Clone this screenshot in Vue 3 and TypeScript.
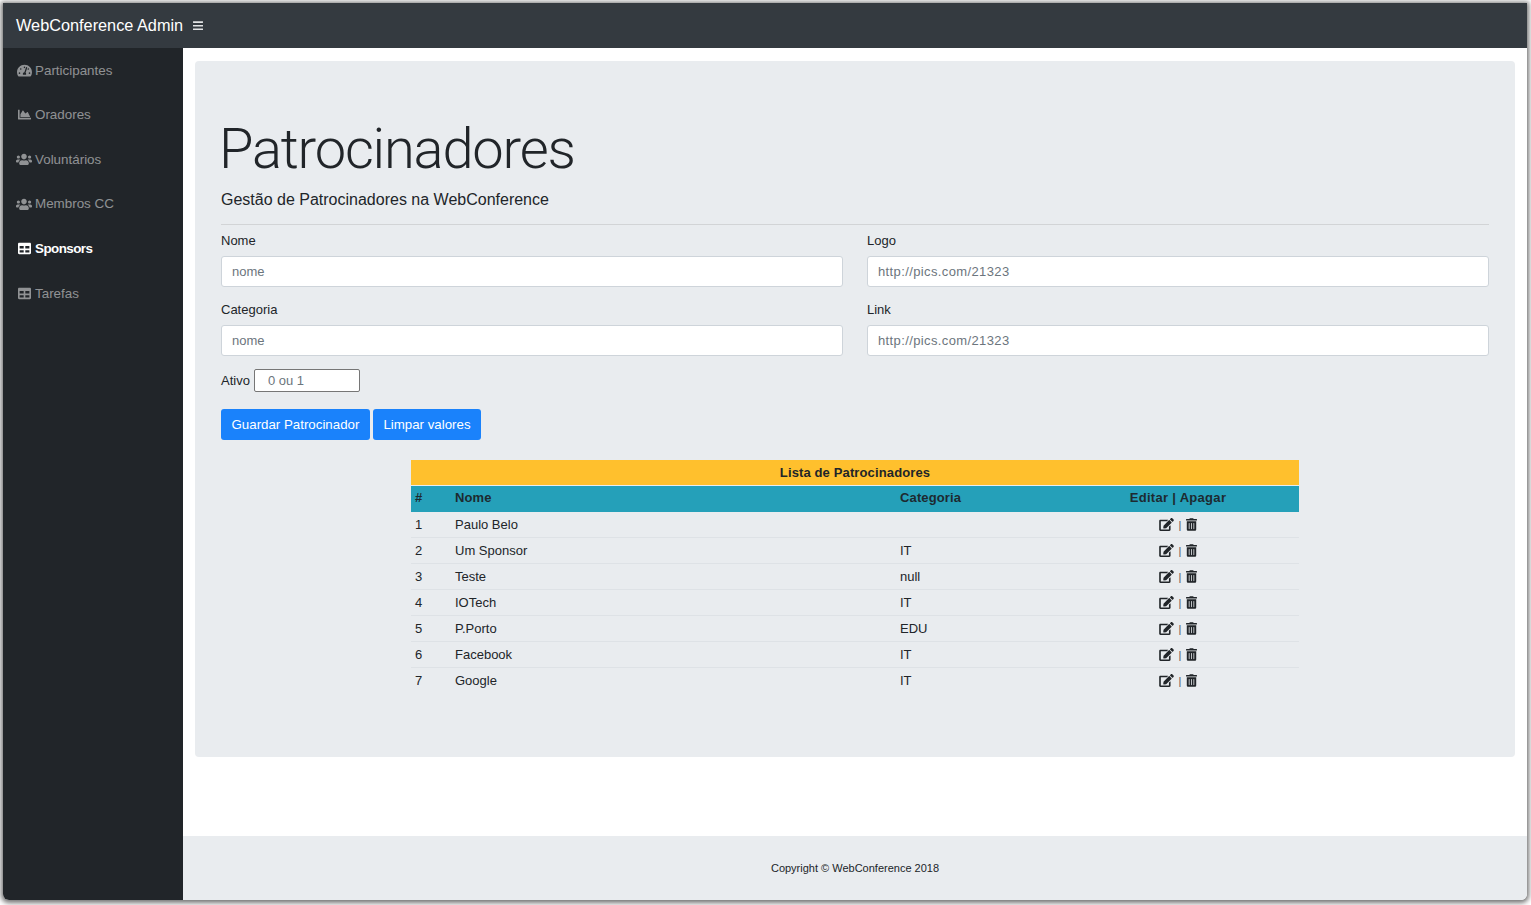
<template>
    <div class="window">
        <header class="topbar">
            <span class="brand">WebConference Admin</span>
            <svg class="bars" viewBox="0 0 448 512"><path :d="icons.bars" /></svg>
        </header>

        <div class="body-row">
            <nav class="sidebar">
                <a v-for="item in menu" :key="item.label" class="nav-item" :class="{ active: item.active }">
                    <span class="nav-icon">
                        <svg :viewBox="`0 0 ${item.w} 512`" :style="{ width: item.size + 'px' }"><path :d="item.d" /></svg>
                    </span>
                    {{ item.label }}
                </a>
            </nav>

            <div class="main">
                <div class="content">
                    <section class="jumbotron">
                        <h1>Patrocinadores</h1>
                        <p class="lead">Gestão de Patrocinadores na WebConference</p>
                        <hr />

                        <div class="form-grid">
                            <div class="field">
                                <label>Nome</label>
                                <input type="text" placeholder="nome" />
                            </div>
                            <div class="field">
                                <label>Logo</label>
                                <input class="url" type="text" placeholder="http://pics.com/21323" />
                            </div>
                            <div class="field">
                                <label>Categoria</label>
                                <input type="text" placeholder="nome" />
                            </div>
                            <div class="field">
                                <label>Link</label>
                                <input class="url" type="text" placeholder="http://pics.com/21323" />
                            </div>
                        </div>

                        <div class="ativo">
                            <label>Ativo</label>
                            <input type="text" placeholder="0 ou 1" />
                        </div>

                        <div class="actions">
                            <button>Guardar Patrocinador</button>
                            <button>Limpar valores</button>
                        </div>

                        <table class="list">
                            <colgroup>
                                <col class="c-id" />
                                <col class="c-name" />
                                <col class="c-cat" />
                                <col />
                            </colgroup>
                            <thead>
                                <tr class="title-row">
                                    <th colspan="4">Lista de Patrocinadores</th>
                                </tr>
                                <tr class="head-row">
                                    <th>#</th>
                                    <th>Nome</th>
                                    <th>Categoria</th>
                                    <th class="c-act">Editar | Apagar</th>
                                </tr>
                            </thead>
                            <tbody>
                                <tr v-for="row in sponsors" :key="row.id">
                                    <td>{{ row.id }}</td>
                                    <td>{{ row.name }}</td>
                                    <td>{{ row.category }}</td>
                                    <td class="c-act">
                                        <svg class="edit" viewBox="0 0 576 512"><path :d="icons.edit" /></svg>
                                        <span class="sep">|</span>
                                        <svg class="trash" viewBox="0 0 448 512"><path :d="icons.trash" /></svg>
                                    </td>
                                </tr>
                            </tbody>
                        </table>
                    </section>
                </div>

                <footer class="footer">Copyright © WebConference 2018</footer>
            </div>
        </div>
    </div>
</template>

<script setup lang="ts">
const icons = {
    bars: 'M16 132h416c8.837 0 16-7.163 16-16V76c0-8.837-7.163-16-16-16H16C7.163 60 0 67.163 0 76v40c0 8.837 7.163 16 16 16zm0 160h416c8.837 0 16-7.163 16-16v-40c0-8.837-7.163-16-16-16H16c-8.837 0-16 7.163-16 16v40c0 8.837 7.163 16 16 16zm0 160h416c8.837 0 16-7.163 16-16v-40c0-8.837-7.163-16-16-16H16c-8.837 0-16 7.163-16 16v40c0 8.837 7.163 16 16 16z',
    gauge: 'M288 32C128.94 32 0 160.94 0 320c0 52.8 14.25 102.26 39.06 144.8 5.61 9.62 16.3 15.2 27.44 15.2h443c11.14 0 21.83-5.58 27.44-15.2C561.75 422.26 576 372.8 576 320c0-159.06-128.94-288-288-288zm0 64c14.71 0 26.58 10.13 30.32 23.65-1.11 2.26-2.64 4.23-3.45 6.67l-9.22 27.67c-5.13 3.49-10.97 6.01-17.64 6.01-17.67 0-32-14.33-32-32S270.33 96 288 96zM96 384c-17.67 0-32-14.33-32-32s14.33-32 32-32 32 14.33 32 32-14.33 32-32 32zm48-160c-17.67 0-32-14.33-32-32s14.33-32 32-32 32 14.33 32 32-14.33 32-32 32zm246.77-72.41l-61.33 184C343.13 347.33 352 364.54 352 384c0 11.72-3.38 22.55-8.88 32H232.88c-5.5-9.45-8.88-20.28-8.88-32 0-33.94 26.5-61.43 59.9-63.59l61.34-184.01c4.17-12.56 17.73-19.45 30.36-15.17 12.57 4.19 19.35 17.79 15.17 30.36zm14.66 57.2l15.52-46.55c3.47-1.29 7.13-2.23 11.05-2.23 17.67 0 32 14.33 32 32s-14.33 32-32 32c-11.38-.01-20.89-6.28-26.57-15.22zM480 384c-17.67 0-32-14.33-32-32s14.33-32 32-32 32 14.33 32 32-14.33 32-32 32z',
    chart: 'M500 384c6.6 0 12 5.4 12 12v40c0 6.6-5.4 12-12 12H12c-6.6 0-12-5.4-12-12V76c0-6.6 5.4-12 12-12h40c6.6 0 12 5.4 12 12v308h436zM372.7 159.5L288 216l-85.3-113.7c-5.1-6.8-15.5-6.3-19.9 1L96 248v104h384l-89.9-187.8c-3.2-6.5-11.4-8.7-17.4-4.7z',
    users: 'M96 224c35.3 0 64-28.7 64-64s-28.7-64-64-64-64 28.7-64 64 28.7 64 64 64zm448 0c35.3 0 64-28.7 64-64s-28.7-64-64-64-64 28.7-64 64 28.7 64 64 64zm32 32h-64c-17.6 0-33.5 7.1-45.1 18.6 40.3 22.1 68.9 62 75.1 109.4h66c17.7 0 32-14.3 32-32v-32c0-35.3-28.7-64-64-64zm-256 0c61.9 0 112-50.1 112-112S381.9 32 320 32 208 82.1 208 144s50.1 112 112 112zm76.8 32h-8.3c-20.8 10-43.9 16-68.5 16s-47.6-6-68.5-16h-8.3C179.6 288 128 339.6 128 403.2V432c0 26.5 21.5 48 48 48h288c26.5 0 48-21.5 48-48v-28.8c0-63.6-51.6-115.2-115.2-115.2zm-223.7-13.4C161.5 263.1 145.6 256 128 256H64c-35.3 0-64 28.7-64 64v32c0 17.7 14.3 32 32 32h65.9c6.3-47.4 34.9-87.3 75.2-109.4z',
    table: 'M464 32H48C21.49 32 0 53.49 0 80v352c0 26.51 21.49 48 48 48h416c26.51 0 48-21.49 48-48V80c0-26.51-21.49-48-48-48zM224 416H64v-96h160v96zm0-160H64v-96h160v96zm224 160H288v-96h160v96zm0-160H288v-96h160v96z',
    edit: 'M402.6 83.2l90.2 90.2c3.8 3.8 3.8 10 0 13.8L274.4 405.6l-92.8 10.3c-12.4 1.4-22.9-9.1-21.5-21.5l10.3-92.8L388.8 83.2c3.8-3.8 10-3.8 13.8 0zm162-22.9l-48.8-48.8c-15.2-15.2-39.9-15.2-55.2 0l-35.4 35.4c-3.8 3.8-3.8 10 0 13.8l90.2 90.2c3.8 3.8 10 3.8 13.8 0l35.4-35.4c15.2-15.3 15.2-40 0-55.2zM384 346.2V448H64V128h229.8c3.2 0 6.2-1.3 8.5-3.5l40-40c7.6-7.6 2.2-20.5-8.5-20.5H48C21.5 64 0 85.5 0 112v352c0 26.5 21.5 48 48 48h352c26.5 0 48-21.5 48-48V306.2c0-10.7-12.9-16-20.5-8.5l-40 40c-2.2 2.3-3.5 5.3-3.5 8.5z',
    trash: 'M32 464a48 48 0 0 0 48 48h288a48 48 0 0 0 48-48V128H32zm272-256a16 16 0 0 1 32 0v224a16 16 0 0 1-32 0zm-96 0a16 16 0 0 1 32 0v224a16 16 0 0 1-32 0zm-96 0a16 16 0 0 1 32 0v224a16 16 0 0 1-32 0zM432 32H312l-9.4-18.7A24 24 0 0 0 281.1 0H166.8a23.72 23.72 0 0 0-21.4 13.3L136 32H16A16 16 0 0 0 0 48v32a16 16 0 0 0 16 16h416a16 16 0 0 0 16-16V48a16 16 0 0 0-16-16z'
}

const menu = [
    { label: 'Participantes', d: icons.gauge, w: 576, size: 15, active: false },
    { label: 'Oradores', d: icons.chart, w: 512, size: 13, active: false },
    { label: 'Voluntários', d: icons.users, w: 640, size: 16, active: false },
    { label: 'Membros CC', d: icons.users, w: 640, size: 16, active: false },
    { label: 'Sponsors', d: icons.table, w: 512, size: 13, active: true },
    { label: 'Tarefas', d: icons.table, w: 512, size: 13, active: false }
]

const sponsors = [
    { id: 1, name: 'Paulo Belo', category: '' },
    { id: 2, name: 'Um Sponsor', category: 'IT' },
    { id: 3, name: 'Teste', category: 'null' },
    { id: 4, name: 'IOTech', category: 'IT' },
    { id: 5, name: 'P.Porto', category: 'EDU' },
    { id: 6, name: 'Facebook', category: 'IT' },
    { id: 7, name: 'Google', category: 'IT' }
]
</script>

<style>
html,
body {
    margin: 0;
    height: 100%;
    background: #fff;
    overflow: hidden;
}
</style>

<style scoped>
.window {
    display: flex;
    flex-direction: column;
    height: 897px;
    margin: 3px 4px 0 3px;
    background: #fff;
    border-radius: 0 0 6px 6px;
    overflow: hidden;
    box-shadow: 0 1px 5px 2px rgba(0, 0, 0, 0.55);
    font-family: 'Liberation Sans', Arial, sans-serif;
    font-size: 13px;
    color: #212529;
}

.topbar {
    display: flex;
    align-items: center;
    flex: none;
    height: 45px;
    padding-left: 13px;
    background: #343a40;
}

.brand {
    font-size: 16.3px;
    color: #fff;
}

.bars {
    width: 10px;
    margin-left: 10px;
    fill: #e2e3e5;
}

.body-row {
    display: flex;
    flex: 1;
    min-height: 0;
}

.sidebar {
    display: flex;
    flex-direction: column;
    flex: none;
    width: 180px;
    background: #212529;
}

.nav-item {
    display: flex;
    align-items: center;
    height: 44.55px;
    padding-left: 13px;
    font-size: 13.4px;
    color: rgba(255, 255, 255, 0.5);
}

.nav-item.active {
    color: #fff;
    font-weight: 700;
    letter-spacing: -0.55px;
}

.nav-icon {
    display: flex;
    justify-content: center;
    width: 16px;
    margin-right: 3px;
}

.nav-icon svg {
    fill: currentColor;
}

.main {
    display: flex;
    flex-direction: column;
    flex: 1;
    min-width: 0;
}

.content {
    flex: 1;
    padding: 13px 12px 0;
}

.jumbotron {
    height: 696px;
    box-sizing: border-box;
    padding: 54px 26px 0;
    background: #e9ecef;
    border-radius: 4px;
}

h1 {
    margin: 0 0 0 -2px;
    font-family: Roboto, 'Liberation Sans', sans-serif;
    font-size: 56px;
    font-weight: 300;
    line-height: 68px;
    letter-spacing: -1.2px;
}

.lead {
    margin: 5px 0 0;
    font-size: 16px;
    line-height: 24px;
}

hr {
    height: 1px;
    margin: 12px 0 0;
    border: 0;
    background: #d2d4d6;
}

.form-grid {
    display: grid;
    grid-template-columns: 1fr 1fr;
    column-gap: 24px;
    row-gap: 14px;
    margin-top: 7px;
}

.field label {
    display: block;
    height: 17px;
    margin-bottom: 7px;
    line-height: 17px;
}

.field input {
    display: block;
    width: 100%;
    height: 31px;
    box-sizing: border-box;
    padding: 0 10px;
    border: 1px solid #ced4da;
    border-radius: 3px;
    background: #fff;
    font: inherit;
}

.field input.url {
    letter-spacing: 0.38px;
}

input::placeholder {
    color: #6c757d;
    opacity: 1;
}

.ativo {
    display: flex;
    align-items: center;
    gap: 4px;
    margin-top: 13px;
}

.ativo input {
    width: 106px;
    height: 23px;
    box-sizing: border-box;
    padding: 0 13px;
    border: 1px solid #767676;
    border-radius: 2px;
    background: #fff;
    font: inherit;
}

.actions {
    display: flex;
    gap: 3px;
    margin-top: 17px;
}

button {
    height: 31px;
    padding: 0 10.5px;
    border: 0;
    border-radius: 3px;
    background: #1a82fb;
    color: #fff;
    font: inherit;
    font-size: 13.3px;
}

.list {
    width: 888px;
    margin: 20px 0 0 190px;
    border-collapse: collapse;
    table-layout: fixed;
}

.c-id {
    width: 44px;
}

.c-name {
    width: 445px;
}

.c-cat {
    width: 157px;
}

th {
    padding: 0;
    font-weight: 700;
    letter-spacing: 0.13px;
    text-align: left;
}

th:first-child,
td:first-child {
    padding-left: 4px;
}

.title-row th {
    height: 25px;
    padding-left: 0;
    background: #ffc02d;
    text-align: center;
}

.head-row th {
    height: 26px;
    padding-bottom: 2px;
    box-sizing: border-box;
    border-top: 1px solid #e9ecef;
    background: #25a0b9;
    color: #1d2a30;
}

th.c-act {
    letter-spacing: 0.3px;
}

th.c-act,
td.c-act {
    text-align: center;
}

td {
    height: 25px;
    padding: 0;
    border-bottom: 1px solid #dee2e6;
}

tbody tr:last-child td {
    border-bottom: 0;
}

.edit {
    width: 15px;
    height: 13px;
    vertical-align: -2px;
    fill: #212529;
}

.trash {
    width: 11px;
    height: 13px;
    vertical-align: -2px;
    fill: #212529;
}

.sep {
    margin: 0 4.5px;
    font-size: 11px;
    color: #555;
}

.footer {
    display: flex;
    align-items: center;
    justify-content: center;
    flex: none;
    height: 64px;
    box-sizing: border-box;
    background: #e9ecef;
    font-size: 11px;
}
</style>
